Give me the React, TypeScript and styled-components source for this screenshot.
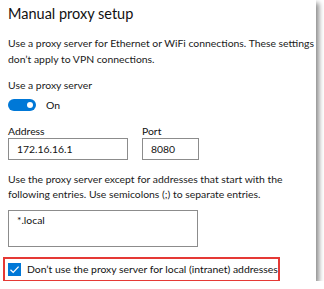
import { FunctionComponent } from 'react'
import styled, { createGlobalStyle } from 'styled-components'

const GlobalStyle = createGlobalStyle`
  body {
    margin: 0;
    background: #fff;
    font-family: Lato, 'Noto Sans', sans-serif;
    color: #111;
  }
`

const Panel = styled.div`
  width: 316px;
  height: 281px;
  box-sizing: border-box;
  background: #fff;
  padding: 3px 0 0 8px;
  box-shadow: 3px 3px 5px rgba(0, 0, 0, 0.45);
`

const Title = styled.h2`
  margin: 0;
  font-size: 14.5px;
  line-height: 22px;
  font-weight: 400;
  color: #111;
`

const Text = styled.p<{ $top?: number }>`
  margin: ${(props) => props.$top || 0}px 0 0 0;
  font-size: 10.4px;
  line-height: 15.5px;
  color: #1a1a1a;
`

const ToggleRow = styled.div`
  display: flex;
  align-items: center;
  gap: 10px;
  margin-top: 5px;
  font-size: 10.4px;
`

const Track = styled.div`
  width: 28px;
  height: 12px;
  border-radius: 6px;
  background: #0078d7;
  display: flex;
  align-items: center;
  justify-content: flex-end;
  padding-right: 3px;
  box-sizing: border-box;
`

const Knob = styled.div`
  width: 6px;
  height: 6px;
  border-radius: 50%;
  background: #fff;
`

const FieldRow = styled.div`
  display: flex;
  gap: 14px;
  margin-top: 14px;
`

const Field = styled.label`
  display: flex;
  flex-direction: column;
  font-size: 10.4px;
  line-height: 13px;
`

const Input = styled.div<{ $width: number; $height?: number }>`
  width: ${(props) => props.$width}px;
  height: ${(props) => props.$height || 22}px;
  box-sizing: border-box;
  border: 1.5px solid #8c8c8c;
  padding: 2px 8px;
  font-size: 10.4px;
  line-height: 16px;
`

const Area = styled(Input)`
  margin-top: 7px;
  padding-top: 1px;
`

const CheckRow = styled.div`
  display: flex;
  align-items: center;
  gap: 6px;
  width: 277px;
  height: 25px;
  box-sizing: border-box;
  margin: 10px 0 0 -5px;
  padding-left: 3px;
  border: 2px solid #e53935;
  font-size: 10.4px;
`

const Box = styled.div`
  width: 13px;
  height: 13px;
  background: #0078d7;
  display: flex;
  align-items: center;
  justify-content: center;
`

const App: FunctionComponent = () => (
  <>
    <GlobalStyle />
    <Panel>
      <Title>Manual proxy setup</Title>
      <Text $top={11}>
        Use a proxy server for Ethernet or WiFi connections. These settings don’t apply to VPN connections.
      </Text>
      <Text $top={11}>Use a proxy server</Text>
      <ToggleRow>
        <Track>
          <Knob />
        </Track>
        On
      </ToggleRow>
      <FieldRow>
        <Field>
          Address
          <Input $width={120}>172.16.16.1</Input>
        </Field>
        <Field>
          Port
          <Input $width={57}>8080</Input>
        </Field>
      </FieldRow>
      <Text $top={12}>
        Use the proxy server except for addresses that start with the following entries. Use semicolons (;) to separate entries.
      </Text>
      <Area $width={190} $height={37}>*.local</Area>
      <CheckRow>
        <Box>
          <svg width="11" height="11" viewBox="0 0 11 11">
            <path d="M1.5 5.8 L4.2 8.4 L9.6 2.6" fill="none" stroke="#fff" strokeWidth="1.3" />
          </svg>
        </Box>
        Don’t use the proxy server for local (intranet) addresses
      </CheckRow>
    </Panel>
  </>
)

export default App
